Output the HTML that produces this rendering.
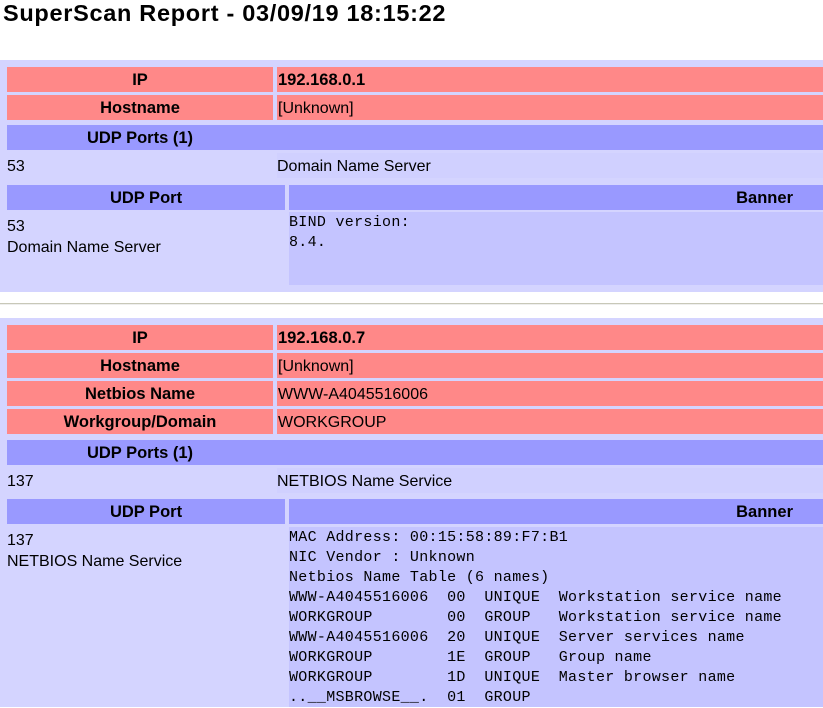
<!DOCTYPE html><html><head><style>
body{margin:0;width:823px;height:707px;overflow:hidden;background:#fff;font-family:"Liberation Sans",Arial,sans-serif;font-size:16px;color:#000;position:relative}
div{position:absolute;box-sizing:border-box}
.t{left:3px;top:0px;font-size:23.5px;font-weight:bold;white-space:nowrap;letter-spacing:0.7px}
.box{left:0;width:823px;background:#d4d4ff}
.p{background:#ff8888;height:25px;line-height:27px}
.b{background:#9999ff;height:25px;line-height:27px}
.l{left:7px;width:266px;text-align:center;font-weight:bold;font-size:16.5px}
.r{left:277px;width:546px;padding-left:1px}
.bold{font-weight:bold;font-size:16.5px}
.pl{left:7px;height:25px;line-height:27px}
.pr{left:277px;width:546px;height:25px;line-height:27px;background:#d0d0ff}
.m{font-family:"Liberation Mono",monospace;font-size:15px;letter-spacing:0.3px;line-height:20px;white-space:pre;background:#c4c4ff;left:289px;width:534px;padding-top:1px}
.hr{left:0;width:823px;top:303px;height:2px;background:#c8c8b8;border-bottom:1px solid #eee}
</style></head><body>
<div class="t">SuperScan Report - 03/09/19 18:15:22</div>
<div class="box" style="top:60px;height:232px"></div>
<div class="p l" style="top:67px">IP</div><div class="p r bold" style="top:67px">192.168.0.1</div>
<div class="p l" style="top:95px">Hostname</div><div class="p r" style="top:95px">[Unknown]</div>
<div class="b" style="top:125px;left:7px;width:816px"></div><div class="l" style="top:125px;line-height:27px">UDP Ports (1)</div>
<div class="pl" style="top:153px">53</div><div class="pr" style="top:153px">Domain Name Server</div>
<div class="b l" style="top:185px;width:278px">UDP Port</div><div class="b bold" style="top:185px;left:289px;width:534px;text-align:right;padding-right:30px">Banner</div>
<div style="left:7px;top:216px;line-height:21px">53<br>Domain Name Server</div>
<div class="m" style="top:212px;height:73px">BIND version:
8.4.</div>
<div class="hr"></div>
<div class="box" style="top:318px;height:389px"></div>
<div class="p l" style="top:325px">IP</div><div class="p r bold" style="top:325px">192.168.0.7</div>
<div class="p l" style="top:353px">Hostname</div><div class="p r" style="top:353px">[Unknown]</div>
<div class="p l" style="top:381px">Netbios Name</div><div class="p r" style="top:381px">WWW-A4045516006</div>
<div class="p l" style="top:409px">Workgroup/Domain</div><div class="p r" style="top:409px">WORKGROUP</div>
<div class="b" style="top:440px;left:7px;width:816px"></div><div class="l" style="top:440px;line-height:27px">UDP Ports (1)</div>
<div class="pl" style="top:468px">137</div><div class="pr" style="top:468px">NETBIOS Name Service</div>
<div class="b l" style="top:499px;width:278px">UDP Port</div><div class="b bold" style="top:499px;left:289px;width:534px;text-align:right;padding-right:30px">Banner</div>
<div style="left:7px;top:530px;line-height:21px">137<br>NETBIOS Name Service</div>
<div class="m" style="top:527px;height:180px">MAC Address: 00:15:58:89:F7:B1
NIC Vendor : Unknown
Netbios Name Table (6 names)
WWW-A4045516006  00  UNIQUE  Workstation service name
WORKGROUP        00  GROUP   Workstation service name
WWW-A4045516006  20  UNIQUE  Server services name
WORKGROUP        1E  GROUP   Group name
WORKGROUP        1D  UNIQUE  Master browser name
..__MSBROWSE__.  01  GROUP</div>
</body></html>
